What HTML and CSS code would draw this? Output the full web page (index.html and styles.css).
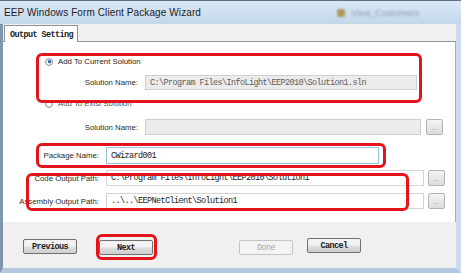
FILE: index.html
```html
<!DOCTYPE html>
<html lang="en">
<head>
    <meta charset="UTF-8">
    <title>EEP Windows Form Client Package Wizard</title>
    <link rel="stylesheet" href="styles.css">
</head>
<body>
    <div class="window">
        <div class="titlebar">
            <span class="title">EEP Windows Form Client Package Wizard</span>
            <span class="ghost"><i class="ghost_icon"></i>View_Customers</span>
        </div>
        <div class="client">
            <div class="tabs">
                <div class="tab">Output Setting</div>
            </div>
            <div class="panel">
                <div class="radio_row first">
                    <span class="radio checked"></span>
                    <span class="label">Add To Current Solution</span>
                </div>
                <div class="field_row sol sol1">
                    <span class="flabel">Solution Name:</span>
                    <span class="box disabled">C:\Program Files\InfoLight\EEP2010\Solution1.sln</span>
                </div>
                <div class="radio_row second">
                    <span class="radio"></span>
                    <span class="label">Add To Exist Solution</span>
                </div>
                <div class="field_row sol sol2">
                    <span class="flabel">Solution Name:</span>
                    <span class="box disabled wide"></span>
                    <span class="dots">..</span>
                </div>
                <div class="field_row pkg">
                    <span class="flabel">Package Name:</span>
                    <span class="box focus">CWizard001</span>
                </div>
                <div class="field_row path code">
                    <span class="flabel">Code Output Path:</span>
                    <span class="box">C:\Program Files\InfoLight\EEP2010\Solution1</span>
                    <span class="dots">..</span>
                </div>
                <div class="field_row path asm">
                    <span class="flabel">Assembly Output Path:</span>
                    <span class="box">..\..\EEPNetClient\Solution1</span>
                    <span class="dots">..</span>
                </div>
            </div>
            <div class="footer">
                <button class="btn prev">Previous</button>
                <button class="btn next">Next</button>
                <button class="btn done" disabled>Done</button>
                <button class="btn cancel">Cancel</button>
            </div>
        </div>

        <!-- red annotation marks -->
        <div class="mark m_current"></div>
        <div class="mark m_pkg"></div>
        <div class="mark m_paths"></div>
        <div class="mark m_next"></div>
    </div>
</body>
</html>
```

FILE: styles.css
```css
body { margin: 0; background: #fff; }
.window { position: relative; width: 461px; height: 273px; display: flex; flex-direction: column; overflow: hidden; font-family: "Liberation Sans", Arial, sans-serif; }

.titlebar { height: 24px; display: flex; align-items: center; justify-content: space-between; background: linear-gradient(#dbe8f5, #c3d7ec); border-top: 1px solid #5b6f86; box-sizing: border-box; padding: 0 0 0 4px; }
.title { font-size: 10px; color: #1d1d1d; letter-spacing: 0.1px; margin-top: -1px; }
.ghost { font-size: 9px; color: #8ca2b9; filter: blur(1.2px); margin-right: 42px; display: flex; align-items: center; gap: 6px; }
.ghost_icon { width: 8px; height: 8px; background: #a89a5e; display: inline-block; border-radius: 2px; }

.client { flex: 1; display: flex; flex-direction: column; background: #f0f0f0; border-left: 3px solid #7f95ae; border-right: 5px solid #c9dbee; border-bottom: 5px solid #b4c9df; }

.tabs { height: 17px; display: flex; align-items: flex-end; border-bottom: 1px solid #8e939b; }
.tab { margin-left: 1px; width: 74px; height: 17px; box-sizing: border-box; background: #fff; border: 1px solid #8e939b; border-bottom: none; margin-bottom: -1px; font-family: "Liberation Mono", monospace; font-size: 8.5px; letter-spacing: -0.6px; font-weight: 700; color: #222; padding: 4px 0 0 5px; }

.panel { height: 180px; background: #fff; border-right: 1px solid #a8abb2; box-sizing: border-box; padding-top: 13px; display: flex; flex-direction: column; font-size: 7.8px; color: #222; }

.radio_row { height: 13px; display: flex; align-items: center; padding-left: 42px; }
.radio_row.second { margin-top: 7px; color: #555; }
.radio { width: 8px; height: 8px; border-radius: 50%; border: 1px solid #8f9aa6; background: radial-gradient(#fff, #dde3ea); margin-right: 5px; box-sizing: border-box; position: relative; }
.radio.checked::after { content: ""; position: absolute; left: 1.5px; top: 1.5px; width: 3px; height: 3px; border-radius: 50%; background: #2a5aa0; box-shadow: 0 0 1px #5c8dd0; }
.label { line-height: 13px; }

.field_row { display: flex; align-items: center; }
.flabel { text-align: right; flex-shrink: 0; color: #2a2a2a; }
.sol .flabel { width: 135px; margin-right: 7px; }
.sol1 { margin-top: 7px; height: 15px; }
.sol2 { margin-top: 9px; height: 16px; }
.pkg { margin-top: 12px; height: 17px; }
.code { margin-top: 6px; height: 16px; }
.asm { margin-top: 7px; height: 16px; }
.pkg .flabel, .path .flabel { width: 96px; margin-right: 7px; }

.box { height: 100%; box-sizing: border-box; border: 1px solid #d5d5d5; background: #fff; font-family: "Liberation Mono", monospace; font-size: 8.5px; letter-spacing: -0.6px; color: #222; padding: 0 0 0 4px; display: flex; align-items: center; white-space: nowrap; overflow: hidden; }
.box.disabled { background: #ececec; color: #5c5c5c; border-color: #cfcfcf; }
.sol1 .box { width: 272px; }
.sol2 .box { width: 276px; }
.pkg .box { width: 273px; border-color: #9cc1de; }
.path .box { width: 318px; }
.dots { width: 17px; height: 16px; box-sizing: border-box; margin-left: 4px; border: 1px solid #b0b4b9; border-radius: 2px; background: linear-gradient(#f4f4f4, #dcdcdc); font-size: 7px; color: #777; display: flex; align-items: center; justify-content: center; }
.sol2 .dots { margin-left: 5px; }

.footer { flex: 1; display: flex; align-items: flex-start; padding: 17px 0 0 20px; }
.btn { width: 54px; height: 15px; padding: 0; box-sizing: border-box; border: 1px solid #707070; border-radius: 2px; background: linear-gradient(#f2f2f2 45%, #dddddd 55%, #cfcfcf); font-family: "Liberation Mono", monospace; font-size: 8.5px; letter-spacing: -0.6px; font-weight: 700; color: #222; }
.next { margin-left: 22px; margin-top: 1px; }
.done { margin-left: 86px; margin-top: 1px; border-color: #c4c4c4; background: #f4f4f4; color: #a8a8a8; font-weight: 400; }
.cancel { margin-left: 14px; margin-top: -1px; }

.mark { position: absolute; border: 3px solid #e5141c; border-radius: 6px; box-sizing: border-box; }
.m_current { left: 36px; top: 53px; width: 386px; height: 50px; }
.m_pkg { left: 36px; top: 143px; width: 350px; height: 25px; }
.m_paths { left: 26px; top: 173px; width: 383px; height: 38px; }
.m_next { left: 96px; top: 234px; width: 61px; height: 26px; }
```
